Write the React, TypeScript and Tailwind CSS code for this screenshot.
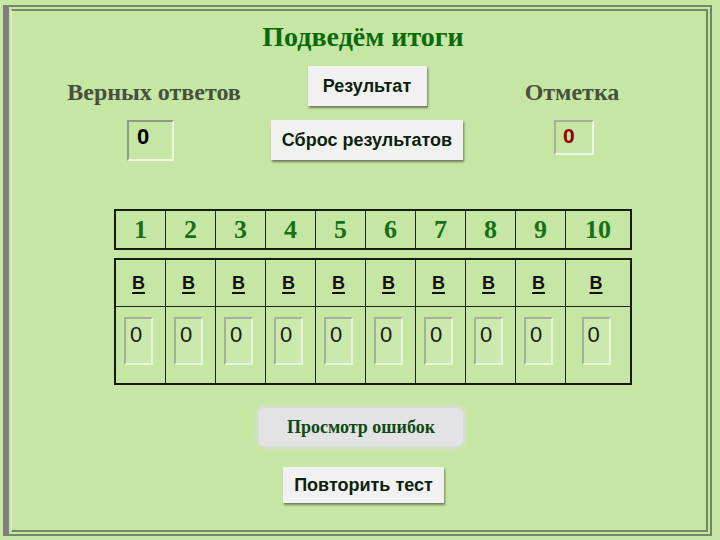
import React from "react";

const serif = { fontFamily: '"Liberation Serif", "Times New Roman", serif' };
const sans = { fontFamily: '"Liberation Sans", Arial, sans-serif' };

const cols = ["1", "2", "3", "4", "5", "6", "7", "8", "9", "10"];
const colW = ["w-[50px]", "w-[50px]", "w-[50px]", "w-[50px]", "w-[50px]", "w-[50px]", "w-[50px]", "w-[50px]", "w-[50px]", "flex-1"];

export default function App() {
  return (
    <div className="w-[720px] h-[540px] bg-[#c6e6a4] overflow-hidden pt-[5px] pl-[3px]">
      <div className="w-[709px] h-[531px] border-l-[6px] border-l-[#7f7f7f] border-t-2 border-r-2 border-b-2 border-t-[#72896a] border-r-[#6e8866] border-b-[#72896a] p-[2px]">
        <div className="w-full h-full border-t-2 border-r-2 border-b-2 border-l border-l-[#dfeccf] border-t-[#72896a] border-r-[#6e8866] border-b-[#72896a] flex flex-col">
          {/* Title */}
          <div className="mt-[12px] pl-[8px] text-center text-[28px] leading-[28px] font-bold text-[#0c6a0c]" style={serif}>
            Подведём итоги
          </div>

          {/* Row: labels + Результат */}
          <div className="mt-[15px] ml-[25px] grid grid-cols-[234px_192px_218px] items-start">
            <div className="mt-[14px] text-center text-[24px] leading-[24px] font-bold text-[#46503e]" style={serif}>
              Верных ответов
            </div>
            <div className="flex justify-center">
              <button className="w-[119px] h-[40px] bg-[#f1f1f1] shadow-[1px_2px_2px_rgba(0,0,0,0.45)] text-[18px] font-bold text-[#0d1f0d]" style={sans}>
                Результат
              </button>
            </div>
            <div className="mt-[14px] text-center text-[24px] leading-[24px] font-bold text-[#46503e]" style={serif}>
              Отметка
            </div>
          </div>

          {/* Row: boxes + Сброс */}
          <div className="mt-[14px] ml-[25px] grid grid-cols-[234px_192px_218px] items-start">
            <div className="flex justify-center pr-[7px]">
              <div className="w-[47px] h-[41px] border-2 border-t-[#8d9a84] border-l-[#8d9a84] border-r-[#eef5e6] border-b-[#eef5e6] pl-[8px] pt-[2px] text-[22px] leading-[26px] font-bold text-black" style={sans}>
                0
              </div>
            </div>
            <div className="flex justify-center">
              <button className="w-[192px] h-[40px] bg-[#f1f1f1] shadow-[1px_2px_2px_rgba(0,0,0,0.45)] text-[18px] font-bold text-[#0d1f0d]" style={sans}>
                Сброс результатов
              </button>
            </div>
            <div className="flex justify-center pl-[4px]">
              <div className="w-[40px] h-[35px] border-2 border-t-[#a3b199] border-l-[#a3b199] border-r-[#eef5e6] border-b-[#eef5e6] pl-[7px] pt-[1px] text-[21px] leading-[26px] font-bold text-[#940000]" style={sans}>
                0
              </div>
            </div>
          </div>

          {/* Table header */}
          <div className="mt-[48px] ml-[102px] w-[518px] h-[41px] border-2 border-[#151c12] flex">
            {cols.map((c, i) => (
              <div
                key={c}
                className={`${colW[i]} ${i < 9 ? "border-r border-[#1e261a]" : ""} flex items-center justify-center text-[26px] font-bold text-[#177017]`}
                style={serif}
              >
                {c}
              </div>
            ))}
          </div>

          {/* Table body */}
          <div className="mt-[8px] ml-[102px] w-[518px] h-[127px] border-2 border-[#151c12] flex flex-col">
            <div className="h-[47px] flex border-b border-[#1e261a]">
              {cols.map((c, i) => (
                <div
                  key={c}
                  className={`${colW[i]} ${i < 9 ? "border-r border-[#1e261a]" : ""} flex items-center justify-center pr-[4px] text-[18px] font-bold underline underline-offset-[3px] decoration-2 text-[#111]`}
                  style={sans}
                >
                  В
                </div>
              ))}
            </div>
            <div className="flex-1 flex">
              {cols.map((c, i) => (
                <div
                  key={c}
                  className={`${colW[i]} ${i < 9 ? "border-r border-[#1e261a]" : ""} flex justify-center pt-[10px] pr-[4px]`}
                >
                  <div className="w-[29px] h-[48px] border-2 border-t-[#a3b199] border-l-[#a3b199] border-r-[#e9f2df] border-b-[#e9f2df] bg-[#cbe8ad] pl-[4px] pt-[3px] text-[22px] leading-[26px] text-[#1a1a1a]" style={sans}>
                    0
                  </div>
                </div>
              ))}
            </div>
          </div>

          {/* Просмотр ошибок */}
          <div className="mt-[23px] ml-[247px] w-[204px] h-[38px] rounded-md bg-[#e3e3e6] shadow-[0_0_4px_2px_#dcdce0] flex items-center justify-center text-[18px] font-bold text-[#0f4a12]" style={serif}>
            Просмотр ошибок
          </div>

          {/* Повторить тест */}
          <button className="mt-[21px] ml-[271px] w-[161px] h-[36px] bg-[#f1f1f1] shadow-[1px_2px_2px_rgba(0,0,0,0.45)] text-[18px] font-bold text-[#0d1f0d]" style={sans}>
            Повторить тест
          </button>
        </div>
      </div>
    </div>
  );
}
